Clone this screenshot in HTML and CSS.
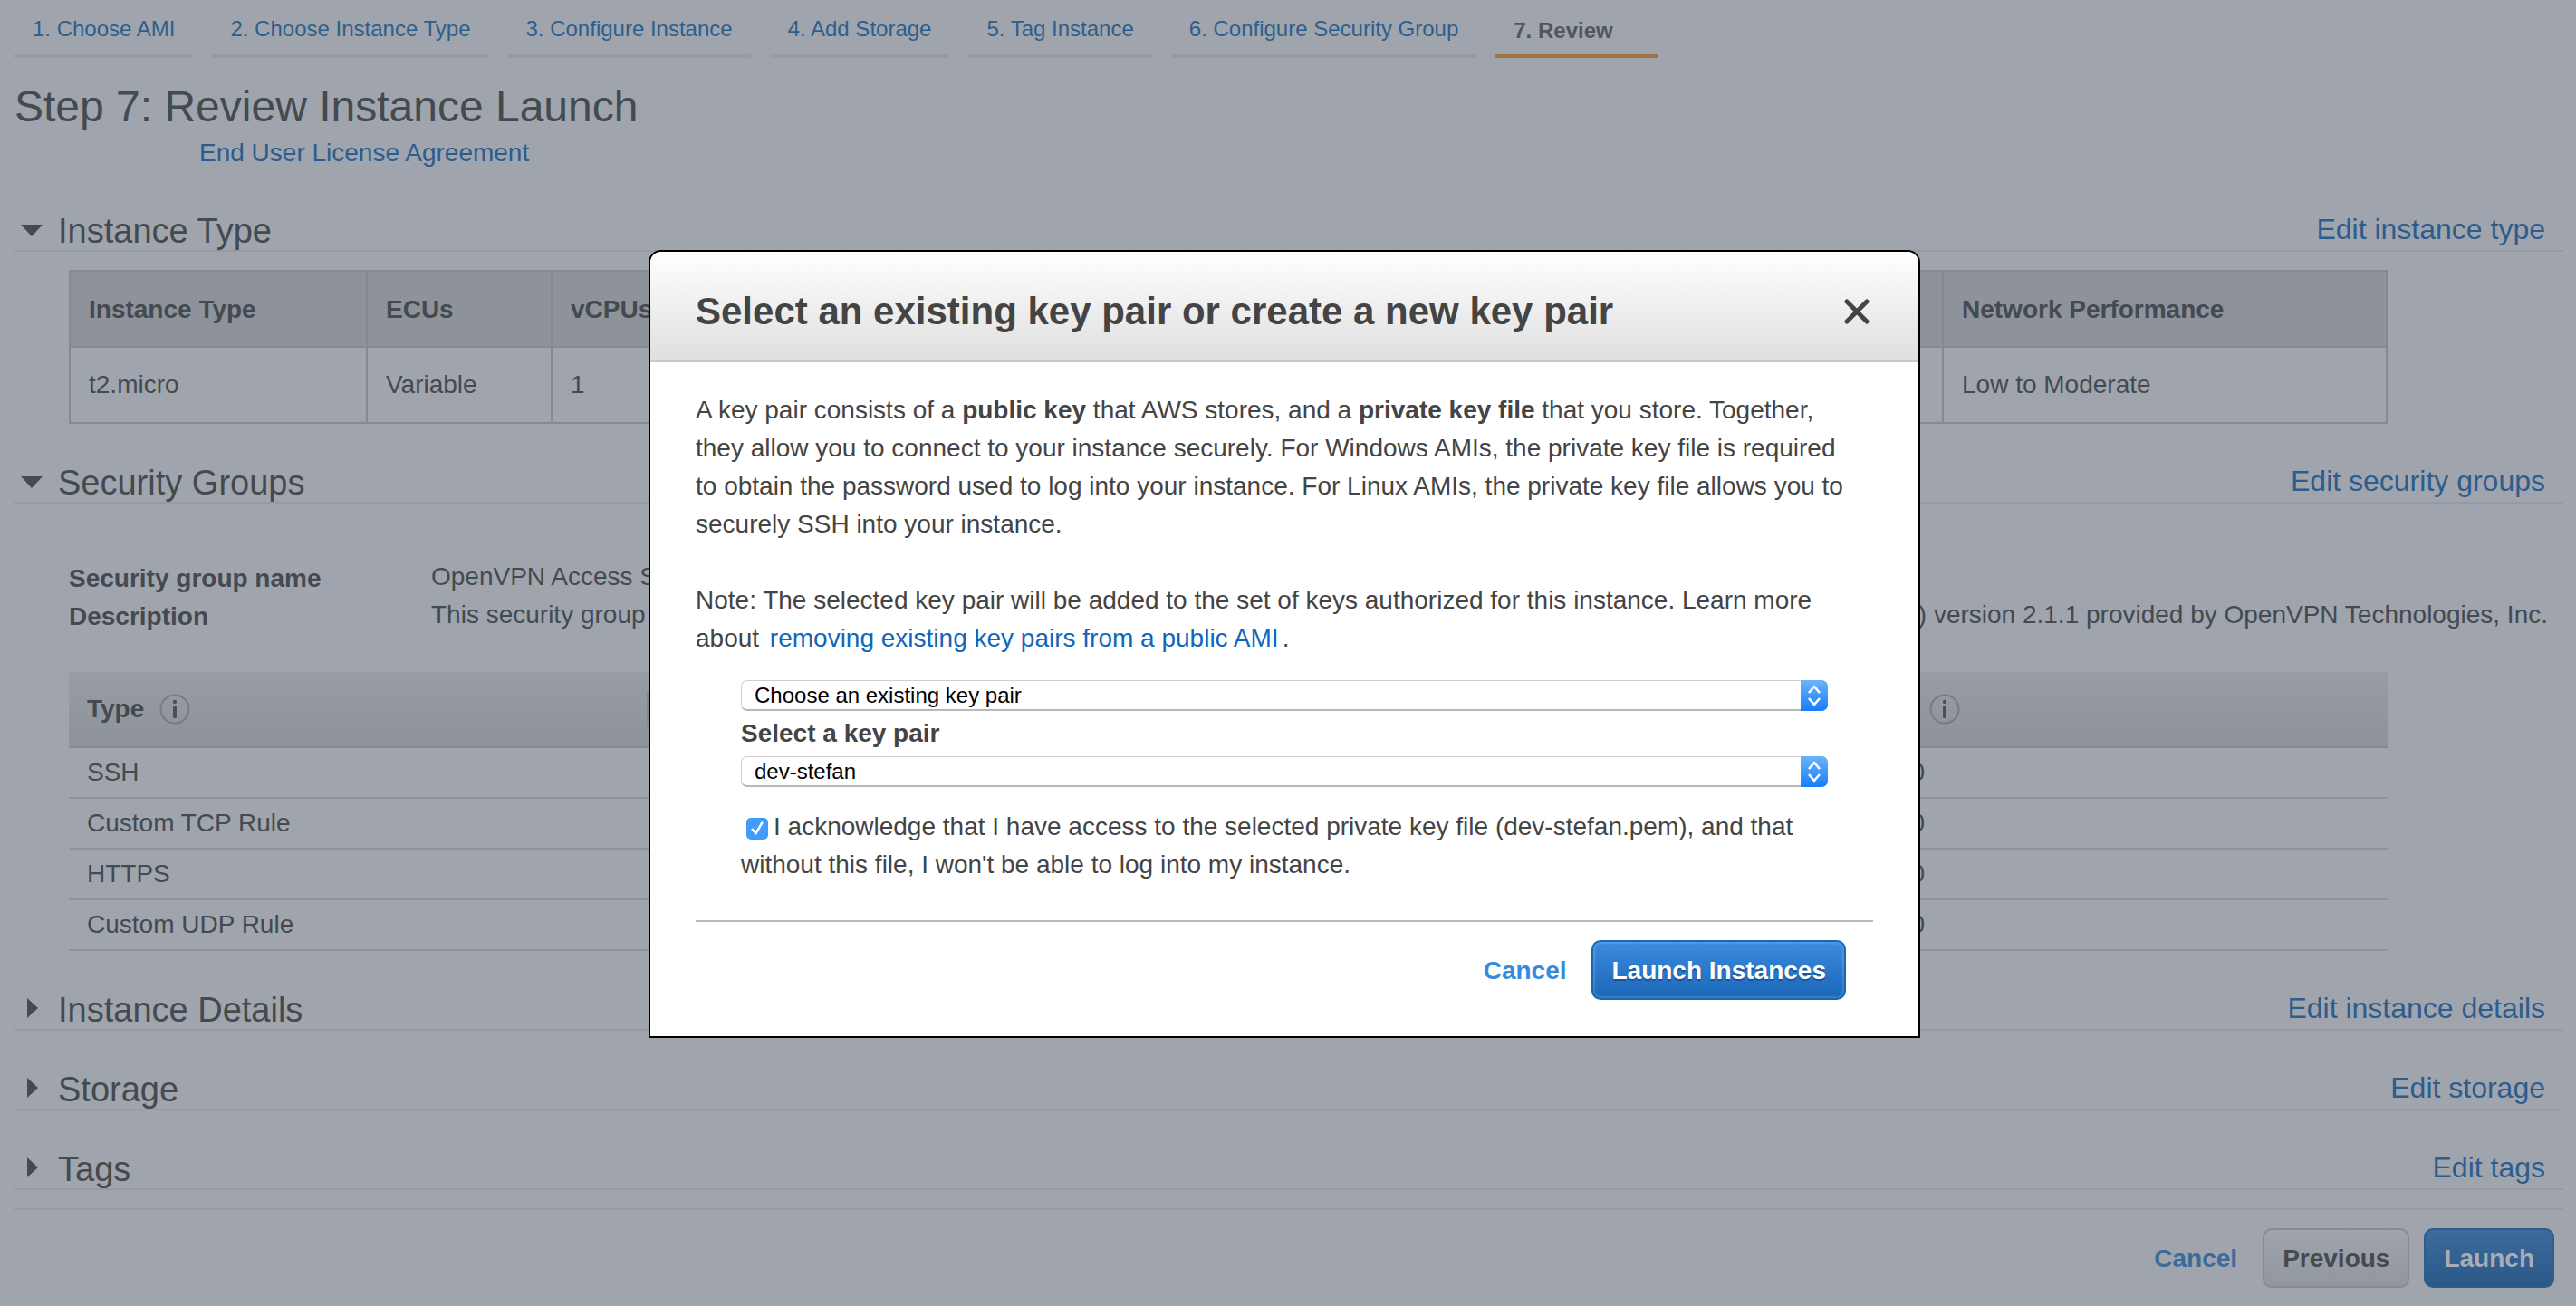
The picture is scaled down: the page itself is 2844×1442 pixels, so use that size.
FILE: index.html
```html
<!DOCTYPE html>
<html lang="en">
<head>
<meta charset="utf-8">
<title>Review Instance Launch</title>
<link rel="stylesheet" href="styles.css">
</head>
<body>
<svg class="symbols" aria-hidden="true">
  <symbol id="info" viewBox="0 0 34 34">
    <circle cx="17" cy="17" r="15.5" fill="none" stroke="#767b84" stroke-width="2"/>
    <circle cx="17" cy="9" r="2.2" fill="#4a5059"/>
    <rect x="15" y="13" width="4" height="14" rx="1.5" fill="#4a5059"/>
  </symbol>
  <symbol id="updown" viewBox="0 0 30 34">
    <path d="M9 14l6-7 6 7M9 20l6 7 6-7" fill="none" stroke="#fff" stroke-width="2.6" stroke-linejoin="round"/>
  </symbol>
</svg>

<div class="page">
  <nav class="steps">
    <a class="step" href="#">1. Choose AMI</a>
    <a class="step" href="#">2. Choose Instance Type</a>
    <a class="step" href="#">3. Configure Instance</a>
    <a class="step" href="#">4. Add Storage</a>
    <a class="step" href="#">5. Tag Instance</a>
    <a class="step" href="#">6. Configure Security Group</a>
    <span class="step current">7. Review</span>
  </nav>

  <h1 class="title">Step 7: Review Instance Launch</h1>
  <p class="eula"><a href="#">End User License Agreement</a></p>

  <section class="section">
    <header class="head">
      <h2><span class="arrow open"></span>Instance Type</h2>
      <a href="#">Edit instance type</a>
    </header>
    <table class="type-table">
      <thead>
        <tr>
          <th class="c-type">Instance Type</th>
          <th class="c-ecu">ECUs</th>
          <th class="c-cpu">vCPUs</th>
          <th></th>
          <th></th>
          <th></th>
          <th class="c-net">Network Performance</th>
        </tr>
      </thead>
      <tbody>
        <tr><td>t2.micro</td><td>Variable</td><td>1</td><td></td><td></td><td></td><td>Low to Moderate</td></tr>
      </tbody>
    </table>
  </section>

  <section class="section">
    <header class="head">
      <h2><span class="arrow open"></span>Security Groups</h2>
      <a href="#">Edit security groups</a>
    </header>
    <dl class="group">
      <dt>Security group name</dt>
      <dd>OpenVPN Access S</dd>
      <dt>Description</dt>
      <dd><span>This security group</span> <span>) version 2.1.1 provided by OpenVPN Technologies, Inc.</span></dd>
    </dl>
    <table class="rules">
      <thead>
        <tr>
          <th><span class="th">Type <svg class="info"><use href="#info"/></svg></span></th>
          <th><span class="th"></span></th>
          <th><span class="th"></span></th>
          <th><span class="th">Source <svg class="info"><use href="#info"/></svg></span></th>
        </tr>
      </thead>
      <tbody>
        <tr><td>SSH</td><td></td><td></td><td>0.0.0.0/0</td></tr>
        <tr><td>Custom TCP Rule</td><td></td><td></td><td>0.0.0.0/0</td></tr>
        <tr><td>HTTPS</td><td></td><td></td><td>0.0.0.0/0</td></tr>
        <tr><td>Custom UDP Rule</td><td></td><td></td><td>0.0.0.0/0</td></tr>
      </tbody>
    </table>
  </section>

  <section class="section">
    <header class="head">
      <h2><span class="arrow"></span>Instance Details</h2>
      <a href="#">Edit instance details</a>
    </header>
  </section>
  <section class="section">
    <header class="head">
      <h2><span class="arrow"></span>Storage</h2>
      <a href="#">Edit storage</a>
    </header>
  </section>
  <section class="section">
    <header class="head">
      <h2><span class="arrow"></span>Tags</h2>
      <a href="#">Edit tags</a>
    </header>
  </section>

  <footer class="actions">
    <button class="btn link" type="button">Cancel</button>
    <button class="btn plain" type="button">Previous</button>
    <button class="btn primary" type="button">Launch</button>
  </footer>
</div>

<div class="overlay">
  <form class="modal" role="dialog" aria-labelledby="modal-title">
    <header class="modal-head">
      <h2 id="modal-title">Select an existing key pair or create a new key pair</h2>
      <button class="close" type="button" aria-label="Close">
        <svg viewBox="0 0 28 28"><path d="M3 3l22 22M25 3L3 25" fill="none" stroke="#444" stroke-width="5" stroke-linecap="round"/></svg>
      </button>
    </header>
    <div class="modal-body">
      <p>A key pair consists of a <strong>public key</strong> that AWS stores, and a <strong>private key file</strong> that you store. Together, they allow you to connect to your instance securely. For Windows AMIs, the private key file is required to obtain the password used to log into your instance. For Linux AMIs, the private key file allows you to securely SSH into your instance.</p>
      <p>Note: The selected key pair will be added to the set of keys authorized for this instance. Learn more about <a class="doc" href="#">removing existing key pairs from a public AMI</a>.</p>
      <div class="fields">
        <div class="select">
          <select aria-label="Key pair option"><option>Choose an existing key pair</option></select>
          <svg class="select-knob"><use href="#updown"/></svg>
        </div>
        <label class="label" for="pair">Select a key pair</label>
        <div class="select">
          <select id="pair"><option>dev-stefan</option></select>
          <svg class="select-knob"><use href="#updown"/></svg>
        </div>
        <label class="ack"><input type="checkbox" checked>I acknowledge that I have access to the selected private key file (dev-stefan.pem), and that without this file, I won't be able to log into my instance.</label>
      </div>
      <div class="modal-actions">
        <button class="btn link" type="button">Cancel</button>
        <button class="btn primary" type="button">Launch Instances</button>
      </div>
    </div>
  </form>
</div>
</body>
</html>
```
FILE: styles.css
```css
* { box-sizing: border-box; }

body {
  margin: 0;
  background: #a0a4ac;
  color: #434a50;
  font: 28px/42px "Helvetica Neue", Helvetica, "Liberation Sans", Arial, sans-serif;
}

h1, h2, p, dl, dd { margin: 0; font-weight: normal; }
a { color: #2d5c8e; text-decoration: none; }
table { table-layout: fixed; border-spacing: 0; }
th, td { padding: 0 20px; text-align: left; white-space: nowrap; }
.symbols { position: absolute; width: 0; height: 0; }

.page { padding: 0 14px 20px 16px; }

/* wizard steps */
.steps { display: flex; gap: 21px; }
.step {
  padding: 18px 20px 14px;
  border-bottom: 4px solid #979ba4;
  color: #2d5f8d;
  font-size: 24px;
  line-height: 28px;
}
.step.current {
  padding: 20px 50px 12px 20px;
  border-color: #a37441;
  color: #50565a;
  font-weight: bold;
}

.title { margin-top: 26px; font-size: 48px; line-height: 56px; }
.eula { margin: 2px 0 0 204px; }

/* collapsible sections */
.section { margin-top: 44px; }
.head {
  display: flex;
  justify-content: space-between;
  align-items: flex-start;
  padding-right: 20px;
  border-bottom: 2px solid #969aa3;
}
.head h2 { display: flex; align-items: center; font-size: 38px; line-height: 42px; }
.head a { font-size: 32px; line-height: 38px; }
.arrow { width: 48px; height: 26px; flex: none; }
.arrow::before {
  content: "";
  display: block;
  width: 12px;
  height: 22px;
  margin-left: 14px;
  background: #434a50;
  clip-path: polygon(0 0, 100% 50%, 0 100%);
}
.arrow.open::before {
  width: 24px;
  height: 13px;
  margin: 6px 0 0 7px;
  clip-path: polygon(0 0, 100% 0, 50% 100%);
}
.arrow.open { display: flex; }

.type-table {
  width: calc(100% - 254px);
  margin: 20px 0 0 60px;
  border-collapse: collapse;
}
.type-table th, .type-table td { height: 84px; border: 2px solid #858a92; }
.type-table th { padding-top: 2px; background: #8e929a; }
.c-type { width: 328px; }
.c-ecu, .c-cpu { width: 204px; }
.c-net { width: 490px; }

.group {
  display: grid;
  grid-template-columns: 400px 1fr;
  grid-auto-rows: 42px;
  margin: 60px 0 42px 60px;
}
.group dt { padding-top: 2px; font-weight: bold; }
.group dd { display: flex; justify-content: space-between; padding-right: 17px; white-space: nowrap; }

.rules { width: calc(100% - 254px); margin-left: 60px; }
.rules th {
  height: 84px;
  padding-right: 0;
  background: linear-gradient(#989ca5, #8e929a);
  border-bottom: 2px solid #858a92;
}
.rules td { height: 56px; border-bottom: 2px solid #8e929b; }
.th { display: flex; align-items: center; gap: 17px; height: 38px; border-right: 2px solid #858a92; }
th:last-child .th { gap: 19px; border-right: 0; }
.info { width: 34px; height: 34px; }

/* buttons */
.actions, .modal-actions { display: flex; justify-content: flex-end; padding-top: 20px; }
.actions { gap: 16px; margin-top: 20px; padding-right: 10px; border-top: 2px solid #969aa3; }
.btn {
  height: 66px;
  padding: 2px 20px 0;
  border: 2px solid #868a93;
  border-radius: 10px;
  font: bold 28px/42px "Helvetica Neue", Helvetica, "Liberation Sans", Arial, sans-serif;
}
.link { padding: 2px 10px 0; border-color: transparent; background: none; color: #3a6b9d; }
.plain { background: linear-gradient(#a0a4ac, #92969f); color: #434a50; }
.actions .primary {
  border-color: #2d5c8d;
  background: linear-gradient(#3c6b9d, #2b5887);
  color: #a8adb6;
}

/* key pair dialog */
.overlay {
  position: fixed;
  inset: 0;
  display: flex;
  justify-content: center;
  align-items: flex-start;
  padding: 276px 8px 0 0;
}
.modal {
  width: 1404px;
  border: 2px solid #000;
  border-radius: 14px 14px 0 0;
  background: #fff;
  color: #444;
}
.modal-head {
  display: flex;
  justify-content: space-between;
  align-items: center;
  height: 122px;
  padding: 12px 50px 0;
  border-bottom: 2px solid #c8c8c8;
  border-radius: 12px 12px 0 0;
  background: linear-gradient(#fff, #dfdfdf);
}
.modal-head h2 { font-size: 42px; font-weight: bold; line-height: 48px; }
.close { display: flex; width: 36px; height: 36px; padding: 4px; border: 0; background: none; }
.close svg { width: 28px; height: 28px; }
.modal-body { padding: 32px 50px 40px; }
.modal-body p { padding-right: 14px; }
.modal-body p + p { margin-top: 42px; }
.doc { margin: 0 4px; color: #1166bb; }

.fields { padding: 25px 50px 40px; }
.select { position: relative; height: 34px; }
.select select {
  display: block;
  width: 100%;
  height: 34px;
  padding: 0 16px 0 14px;
  appearance: none;
  border: 1px solid #cfcfcf;
  border-bottom: 2px solid #b8b8b8;
  border-radius: 7px;
  background: #fff;
  color: #000;
  font: 24px/30px "Helvetica Neue", Helvetica, "Liberation Sans", Arial, sans-serif;
}
.select-knob {
  position: absolute;
  top: 0;
  right: 0;
  width: 30px;
  height: 34px;
  border-radius: 0 7px 7px 0;
  background: linear-gradient(#6cb3fa, #157efb);
  pointer-events: none;
}
.label { display: block; margin: 4px 0; font-weight: bold; }
.ack { display: block; margin-top: 23px; }
.ack input {
  display: inline-grid;
  place-items: center;
  width: 24px;
  height: 24px;
  margin: 0 6px;
  appearance: none;
  border-radius: 5px;
  background: #409bfa;
  vertical-align: 0;
}
.ack input::after {
  content: "";
  width: 14px;
  height: 15px;
  background: #fff;
  clip-path: polygon(0 60%, 14% 48%, 38% 72%, 84% 0, 100% 9%, 42% 100%);
}

.modal-actions { gap: 16px; padding-right: 30px; border-top: 2px solid #b9b9b9; }
.modal-actions .link { color: #348adc; }
.modal-actions .primary {
  border-color: #1a66b4;
  background: linear-gradient(#3b8ade, #1b67b8);
  box-shadow: inset 0 0 2px 2px rgba(255, 255, 255, .15);
  color: #fff;
  text-shadow: 0 2px 1px #1a5394;
}
```
